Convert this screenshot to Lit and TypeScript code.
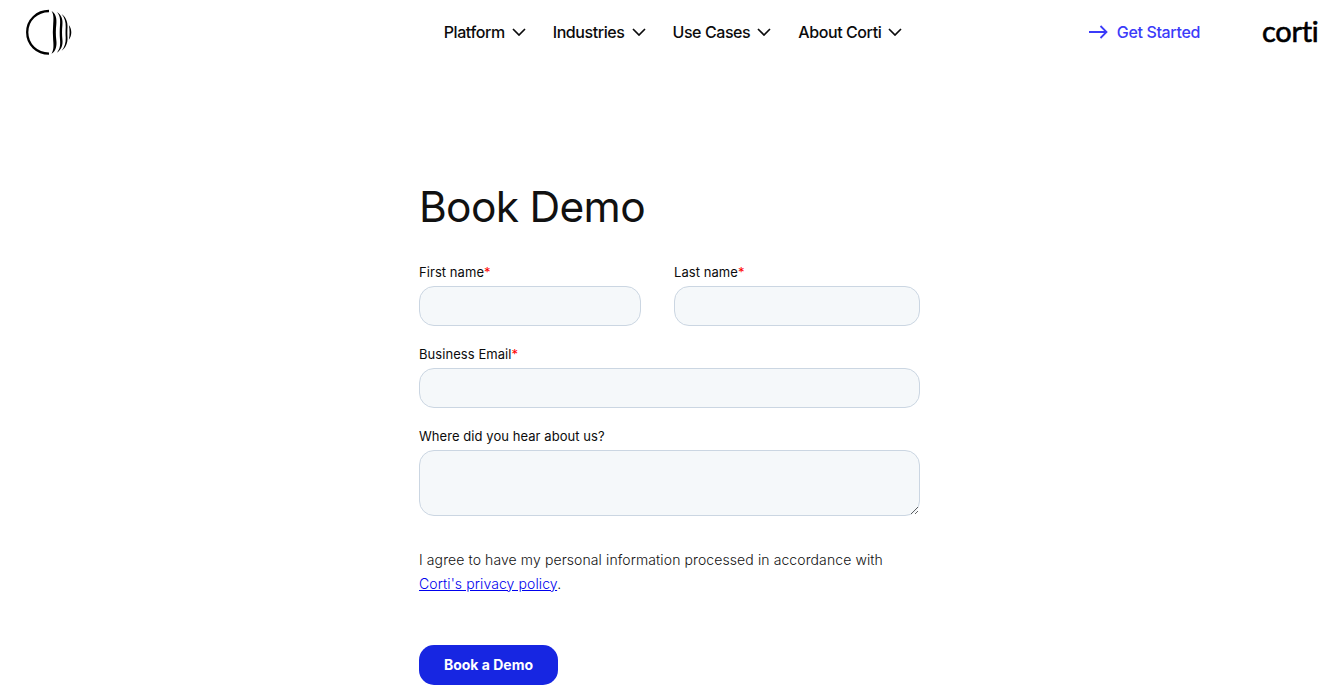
import { LitElement, html, svg, css } from 'lit';
import { customElement, property } from 'lit/decorators.js';

@customElement('corti-nav-item')
export class CortiNavItem extends LitElement {
  @property() label = '';

  static styles = css`
    :host {
      display: flex;
      align-items: center;
      gap: 7px;
      color: #0b0b0c;
      font-size: 16px;
      font-weight: 500;
      line-height: 24px;
      letter-spacing: -0.42px;
      white-space: nowrap;
      cursor: pointer;
    }

    .chevron {
      display: block;
      width: 14px;
      height: 8px;
      fill: none;
      stroke: currentColor;
      stroke-width: 1.7;
    }
  `;

  render() {
    return html`
      <span>${this.label}</span>
      <svg class="chevron" viewBox="0 0 14 8"><path d="M1 1l6 6 6-6" /></svg>
    `;
  }
}

@customElement('corti-field')
export class CortiField extends LitElement {
  @property() label = '';
  @property({ type: Boolean }) required = false;
  @property({ type: Boolean }) multiline = false;

  static styles = css`
    :host {
      display: block;
    }

    .label {
      display: block;
      height: 20px;
      margin-bottom: 4px;
      color: #0b0b0c;
      font-size: 13px;
      line-height: 20px;
      letter-spacing: 0.06px;
    }

    .required {
      color: #f00;
    }

    .control {
      display: block;
      box-sizing: border-box;
      width: 100%;
      height: 40px;
      margin: 0;
      padding: 9px 10px;
      border: 1px solid #cbd6e2;
      border-radius: 15px;
      background-color: #f5f8fa;
      font: 16px/22px Inter, sans-serif;
      outline: none;
    }

    .tall {
      height: 66px;
    }
  `;

  render() {
    return html`
      <label class="label" for="control"
        >${this.label}${this.required ? html`<span class="required">*</span>` : ''}</label
      >
      ${this.multiline
        ? html`<textarea id="control" class="control tall"></textarea>`
        : html`<input id="control" class="control" type="text" />`}
    `;
  }
}

const navItems = ['Platform', 'Industries', 'Use Cases', 'About Corti'];

const logo = svg`
  <path d="M23 2C11 2 1.200 11 1.200 23.300S11 44.600 23 44.600" fill="none" stroke="#000" stroke-width="2.300" />
  <path d="M25.500 1.900C29.800 4.200 31 9.500 30.300 15.500c-.6 5-.6 10.600 0 15.600.8 6-.500 11.400-4.800 13.600 1.900-2.800 2.300-6.200 1.700-13.100-.5-5.500-.5-11.100 0-16.600.6-7.100.2-10.300-1.700-13.100z" />
  <path d="M31 2.900c4.600 3 6 7.500 5.400 13.100-.5 5-.5 9.600 0 14.600.6 5.600-.8 10.100-5.400 13.100 2.600-3.300 3.600-6.500 3-13.100-.4-5.100-.4-9.500 0-14.600.6-6.600-.4-9.800-3-13.100z" />
  <path d="M35.600 4.900c4.200 3 6.200 8 5.900 13-.2 4-.2 6.800 0 10.800.3 5-1.700 10-5.900 13 3-3.700 4.300-7.800 4.100-13-.2-4-.2-6.800 0-10.800.2-5.200-1.100-9.300-4.100-13z" />
  <path d="M42.900 15.900c3.200 4.300 3.200 10.500 0 14.800.900-4.700.900-10.100 0-14.800z" />
`;

@customElement('app-root')
export class AppRoot extends LitElement {
  static styles = css`
    :host {
      display: block;
      height: 688px;
      overflow: hidden;
      background: #fff;
      font-family: Inter, sans-serif;
    }

    .header {
      display: grid;
      grid-template-columns: 1fr auto 1fr;
      align-items: center;
      box-sizing: border-box;
      height: 64px;
      padding: 0 24px 0 26px;
    }

    .logo {
      display: block;
      width: 46px;
      height: 46px;
    }

    .nav {
      display: flex;
      gap: 27px;
      margin-left: 1px;
    }

    .right {
      display: flex;
      align-items: center;
      justify-content: flex-end;
      gap: 63px;
    }

    .cta {
      display: flex;
      align-items: center;
      gap: 9px;
      color: #3b3bf9;
      font-size: 16px;
      font-weight: 500;
      line-height: 24px;
      letter-spacing: -0.35px;
      text-decoration: none;
    }

    .arrow {
      width: 19px;
      height: 14px;
      fill: none;
      stroke: currentColor;
      stroke-width: 1.8;
    }

    .wordmark {
      width: 57px;
      margin-left: -1px;
      padding-bottom: 2px;
      font-family: Lato, sans-serif;
      font-size: 29px;
      line-height: 32px;
      letter-spacing: -0.3px;
      font-variant-ligatures: none;
      white-space: nowrap;
      color: #000;
      -webkit-text-stroke: 0.6px #000;
    }

    .content {
      width: 501px;
      margin: 115px 0 0 419px;
    }

    .title {
      margin: 0;
      color: #111;
      font-size: 42.5px;
      font-weight: 400;
      line-height: 56px;
      letter-spacing: -0.7px;
      white-space: nowrap;
    }

    .form {
      display: grid;
      grid-template-columns: 222px 246px;
      column-gap: 33px;
      row-gap: 18px;
      margin-top: 27px;
    }

    .wide {
      grid-column: 1 / -1;
    }

    .consent {
      margin: 32px 0 0;
      color: #111;
      font-size: 14px;
      font-weight: 300;
      line-height: 24px;
      letter-spacing: 0.1px;
      white-space: nowrap;
    }

    .consent a {
      color: #0000ee;
    }

    .submit {
      display: block;
      width: 139px;
      height: 40px;
      margin-top: 49px;
      padding: 0;
      border: 0;
      border-radius: 15px;
      background: #1726e2;
      color: #fff;
      font: 700 14px/14px Inter, sans-serif;
      cursor: pointer;
    }
  `;

  render() {
    return html`
      <header class="header">
        <svg class="logo" viewBox="0 0 46 46">${logo}</svg>
        <nav class="nav">
          ${navItems.map((item) => html`<corti-nav-item label=${item}></corti-nav-item>`)}
        </nav>
        <div class="right">
          <a class="cta" href="#">
            <svg class="arrow" viewBox="0 0 19 14"><path d="M0 7h17.500M11.500 1l6 6-6 6" /></svg>
            <span>Get Started</span>
          </a>
          <span class="wordmark">corti</span>
        </div>
      </header>
      <main class="content">
        <h1 class="title">Book Demo</h1>
        <div class="form">
          <corti-field label="First name" required></corti-field>
          <corti-field label="Last name" required></corti-field>
          <corti-field class="wide" label="Business Email" required></corti-field>
          <corti-field class="wide" label="Where did you hear about us?" multiline></corti-field>
        </div>
        <p class="consent">
          I agree to have my personal information processed in accordance with<br />
          <a href="#">Corti's privacy policy</a>.
        </p>
        <button class="submit">Book a Demo</button>
      </main>
    `;
  }
}
